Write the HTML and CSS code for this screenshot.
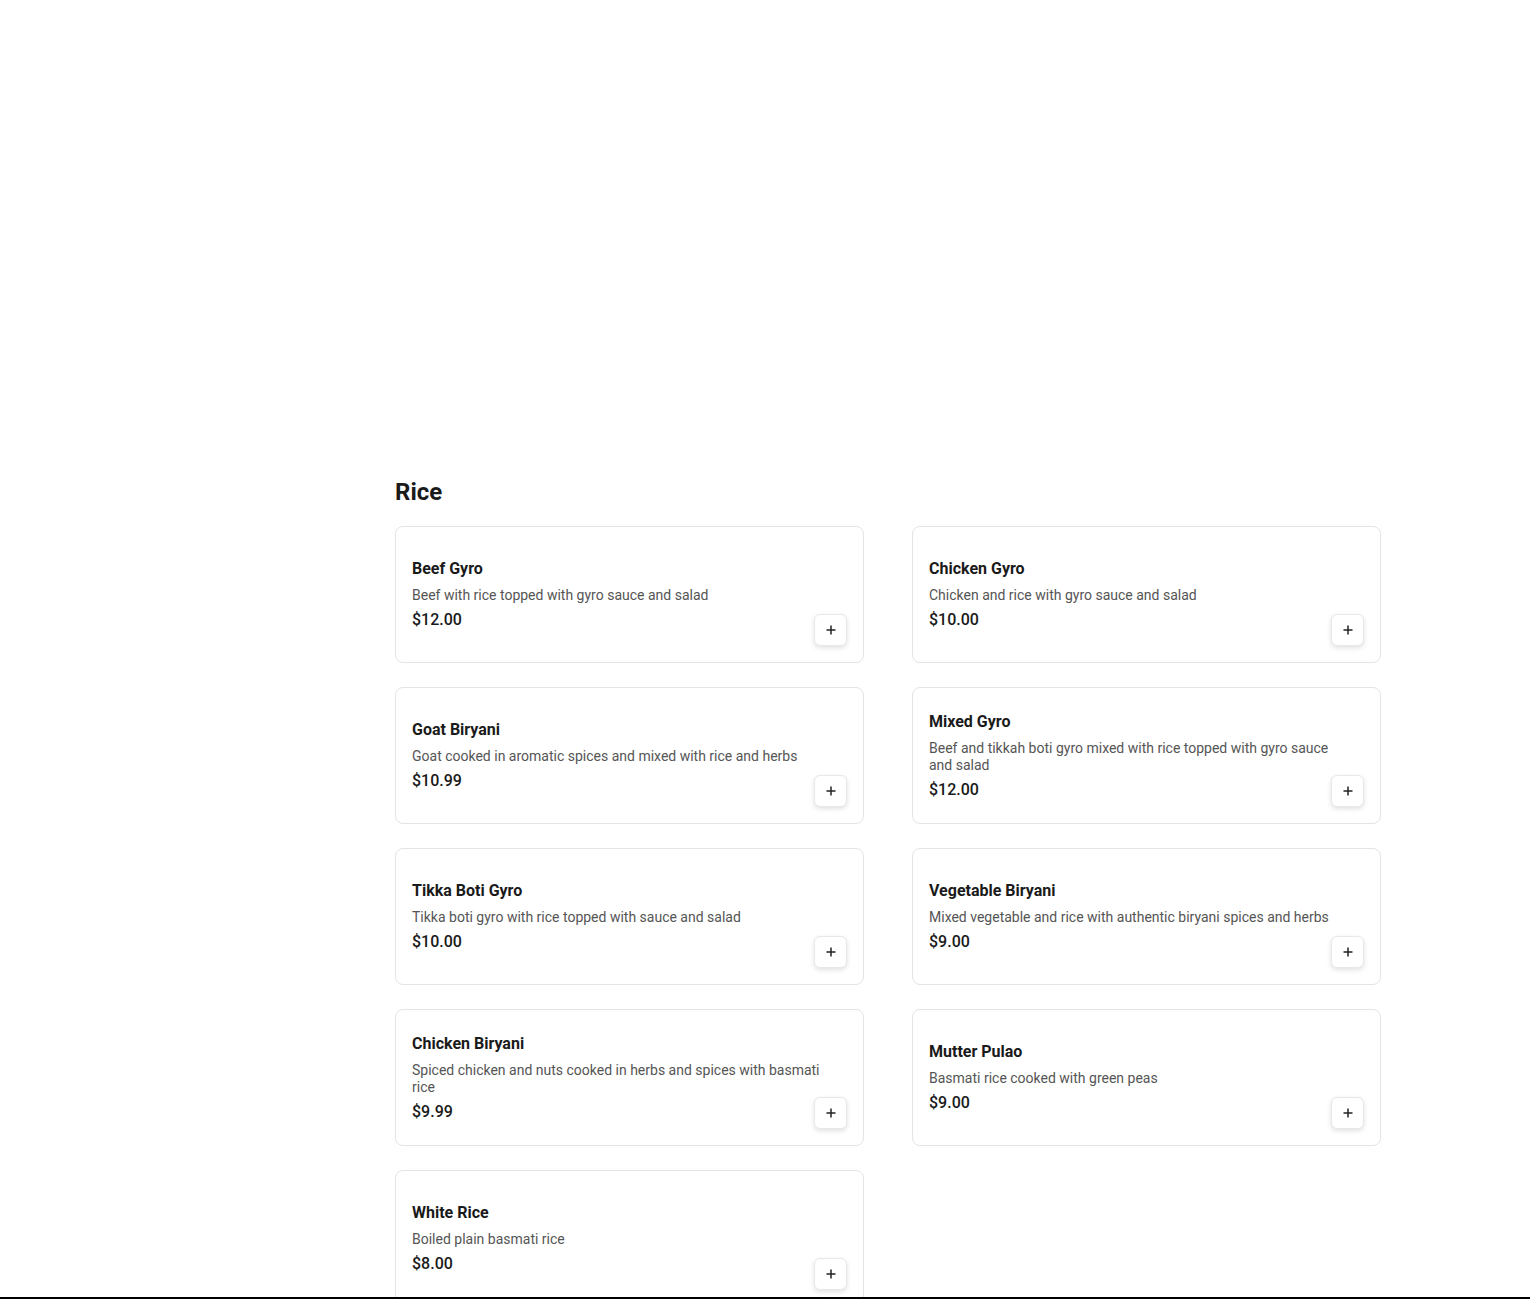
FILE: index.html
```
<!DOCTYPE html>
<html lang="en">
<head>
    <meta charset="UTF-8">
    <meta name="viewport" content="width=device-width, initial-scale=1.0">
    <title>Menu - Rice</title>
    <link rel="stylesheet" href="styles.css">
</head>
<body>
    <div class="hero"></div>

    <main class="menu">
        <section class="category">
            <h2>Rice</h2>
            <div class="items">
                <div class="item">
                    <div class="item-info">
                        <div class="item-name">Beef Gyro</div>
                        <div class="item-desc">Beef with rice topped with gyro sauce and salad</div>
                        <div class="item-price">$12.00</div>
                    </div>
                    <button class="add-btn" aria-label="Add Beef Gyro"><svg width="12" height="12" viewBox="0 0 12 12"><path d="M6 1.5v9M1.5 6h9"/></svg></button>
                </div>
                <div class="item">
                    <div class="item-info">
                        <div class="item-name">Chicken Gyro</div>
                        <div class="item-desc">Chicken and rice with gyro sauce and salad</div>
                        <div class="item-price">$10.00</div>
                    </div>
                    <button class="add-btn" aria-label="Add Chicken Gyro"><svg width="12" height="12" viewBox="0 0 12 12"><path d="M6 1.5v9M1.5 6h9"/></svg></button>
                </div>
                <div class="item">
                    <div class="item-info">
                        <div class="item-name">Goat Biryani</div>
                        <div class="item-desc">Goat cooked in aromatic spices and mixed with rice and herbs</div>
                        <div class="item-price">$10.99</div>
                    </div>
                    <button class="add-btn" aria-label="Add Goat Biryani"><svg width="12" height="12" viewBox="0 0 12 12"><path d="M6 1.5v9M1.5 6h9"/></svg></button>
                </div>
                <div class="item">
                    <div class="item-info">
                        <div class="item-name">Mixed Gyro</div>
                        <div class="item-desc">Beef and tikkah boti gyro mixed with rice topped with gyro sauce and salad</div>
                        <div class="item-price">$12.00</div>
                    </div>
                    <button class="add-btn" aria-label="Add Mixed Gyro"><svg width="12" height="12" viewBox="0 0 12 12"><path d="M6 1.5v9M1.5 6h9"/></svg></button>
                </div>
                <div class="item">
                    <div class="item-info">
                        <div class="item-name">Tikka Boti Gyro</div>
                        <div class="item-desc">Tikka boti gyro with rice topped with sauce and salad</div>
                        <div class="item-price">$10.00</div>
                    </div>
                    <button class="add-btn" aria-label="Add Tikka Boti Gyro"><svg width="12" height="12" viewBox="0 0 12 12"><path d="M6 1.5v9M1.5 6h9"/></svg></button>
                </div>
                <div class="item">
                    <div class="item-info">
                        <div class="item-name">Vegetable Biryani</div>
                        <div class="item-desc">Mixed vegetable and rice with authentic biryani spices and herbs</div>
                        <div class="item-price">$9.00</div>
                    </div>
                    <button class="add-btn" aria-label="Add Vegetable Biryani"><svg width="12" height="12" viewBox="0 0 12 12"><path d="M6 1.5v9M1.5 6h9"/></svg></button>
                </div>
                <div class="item">
                    <div class="item-info">
                        <div class="item-name">Chicken Biryani</div>
                        <div class="item-desc">Spiced chicken and nuts cooked in herbs and spices with basmati rice</div>
                        <div class="item-price">$9.99</div>
                    </div>
                    <button class="add-btn" aria-label="Add Chicken Biryani"><svg width="12" height="12" viewBox="0 0 12 12"><path d="M6 1.5v9M1.5 6h9"/></svg></button>
                </div>
                <div class="item">
                    <div class="item-info">
                        <div class="item-name">Mutter Pulao</div>
                        <div class="item-desc">Basmati rice cooked with green peas</div>
                        <div class="item-price">$9.00</div>
                    </div>
                    <button class="add-btn" aria-label="Add Mutter Pulao"><svg width="12" height="12" viewBox="0 0 12 12"><path d="M6 1.5v9M1.5 6h9"/></svg></button>
                </div>
                <div class="item">
                    <div class="item-info">
                        <div class="item-name">White Rice</div>
                        <div class="item-desc">Boiled plain basmati rice</div>
                        <div class="item-price">$8.00</div>
                    </div>
                    <button class="add-btn" aria-label="Add White Rice"><svg width="12" height="12" viewBox="0 0 12 12"><path d="M6 1.5v9M1.5 6h9"/></svg></button>
                </div>
            </div>
        </section>
    </main>

    <div class="cart-bar"></div>
</body>
</html>
```

FILE: styles.css
```
body {
    font-family: Roboto, "Noto Sans", Arial, sans-serif;
    margin: 0;
    background: #fff;
    color: #1a1a1a;
}
.hero {
    height: 476px;
}
.menu {
    width: 986px;
    margin-left: 395px;
    padding-bottom: 40px;
}
.category h2 {
    font-size: 24px;
    line-height: 32px;
    font-weight: 700;
    margin: 0 0 18px;
    color: #1a1a1a;
}
.items {
    display: grid;
    grid-template-columns: 1fr 1fr;
    column-gap: 48px;
    row-gap: 24px;
}
.item {
    position: relative;
    box-sizing: border-box;
    min-height: 137px;
    display: flex;
    align-items: center;
    padding: 16px;
    border: 1px solid #e4e4e4;
    border-radius: 8px;
    background: #fff;
}
.item-info {
    flex: 1;
    min-width: 0;
    padding-right: 16px;
}
.item-name {
    font-size: 16px;
    line-height: 24px;
    font-weight: 700;
    color: #1a1a1a;
}
.item-desc {
    font-size: 14px;
    line-height: 17px;
    margin-top: 6px;
    color: #555;
}
.item-price {
    font-size: 16px;
    line-height: 24px;
    font-weight: 500;
    margin-top: 4px;
    color: #1a1a1a;
}
.add-btn {
    position: absolute;
    right: 16px;
    bottom: 16px;
    width: 33px;
    height: 32px;
    padding: 0;
    display: flex;
    align-items: center;
    justify-content: center;
    background: #fff;
    border: 1px solid #e8e8e8;
    border-radius: 6px;
    box-shadow: 0 2px 5px rgba(0,0,0,0.12);
    cursor: pointer;
}
.add-btn svg {
    stroke: #222;
    stroke-width: 1.5;
    fill: none;
}
.cart-bar {
    position: fixed;
    left: 0;
    right: 0;
    bottom: 0;
    height: 2px;
    background: #000;
}
```
